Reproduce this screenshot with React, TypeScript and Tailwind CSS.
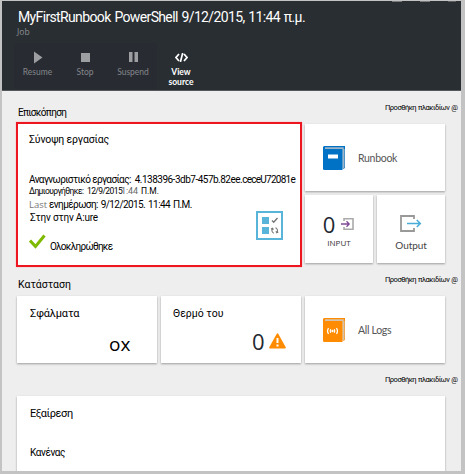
import type { ReactNode } from 'react';

const ui = "font-['Open_Sans','Noto_Sans',sans-serif]";
const label = "font-['Lato','Open_Sans',sans-serif]";

function Tile({ className = '', children }: { className?: string; children?: ReactNode }) {
  return (
    <div className={`bg-white shadow-[0_1px_2px_rgba(0,0,0,0.35)] ${className}`}>{children}</div>
  );
}

function SectionHead({ title, titleClass = '' }: { title?: string; titleClass?: string }) {
  return (
    <div className="flex h-[14px] justify-between whitespace-nowrap">
      <span className={`pt-[3px] leading-[14px] ${titleClass}`}>{title}</span>
      <span className="w-[74px] text-[7.5px] leading-[10px] tracking-[-0.5px] [word-spacing:0.5px]">Προσθήκη πλακιδίων @</span>
    </div>
  );
}

function Command({ icon, text, active = false, width }: { icon: ReactNode; text: ReactNode; active?: boolean; width: string }) {
  return (
    <div className={`flex flex-col items-center ${width} ${active ? 'font-bold text-white' : 'text-[#83868a]'}`}>
      <div className="flex h-[14px] items-center">{icon}</div>
      <div className={`mt-[3px] text-center text-[8.5px] leading-[10px] ${label}`}>{text}</div>
    </div>
  );
}

function Header() {
  return (
    <header className="h-[90px] border-b border-[#55585b] bg-[#292e32] text-white">
      <div className="flex h-px justify-end gap-[18px] pr-[5px]">
        <i className="w-[10px] bg-[#777b7e]" />
        <i className="w-[10px] bg-[#777b7e]" />
        <i className="w-[8px] bg-[#5b5f62]" />
      </div>
      <h1 className="pt-[6px] pl-[16px] text-[14px] leading-[18px] whitespace-nowrap tracking-[-0.64px] [word-spacing:1px]">
        MyFirstRunbook PowerShell 9/12/2015, 11:44 π.μ.
      </h1>
      <p className={`pl-[15px] text-[8.5px] leading-[12px] text-[#8d9094] ${ui}`}>Job</p>
      <div className="mt-[5px] flex h-[46px] pl-[12px]">
        <div className="flex bg-[#282b32] pt-[7px]">
          <Command width="w-[47px]" text="Resume" icon={<svg width="10" height="13" viewBox="0 0 10 13"><path d="M1 0.5 9.5 6.5 1 12.5Z" fill="#9c9ea1" /></svg>} />
          <Command width="w-[48px]" text="Stop" icon={<svg width="9" height="9"><path d="M0 0h9v9H0z" fill="#9c9ea1" /></svg>} />
          <Command width="w-[48px]" text="Suspend" icon={<svg width="9" height="10"><path d="M0 0h3.5v10H0zM5.5 0H9v10H5.5z" fill="#9c9ea1" /></svg>} />
        </div>
        <div className="pt-[7px]">
          <Command width="w-[48px]" active text={<><span className="block">View</span><span className="block">source</span></>} icon={<svg width="13" height="9" viewBox="0 0 13 9" fill="none" stroke="#fff" strokeWidth="1.7"><path d="M4 1 1 4.5 4 8M9 1l3 3.5L9 8M7.7 0 5.4 9" /></svg>} />
        </div>
      </div>
    </header>
  );
}

function SummaryIcon() {
  return (
    <svg width="27" height="29" viewBox="0 0 27 29" fill="none">
      <rect x="1" y="1" width="25" height="27" stroke="#59b4d9" strokeWidth="2" />
      <path d="M6 6h7v7H6zM6 16h7v7H6z" fill="#59b4d9" />
      <path d="m16 9.5 1.7 1.7L21.5 7" stroke="#777" strokeWidth="1.4" />
      <path d="M18 22.2a2.9 2.9 0 0 1-1.6-4.4M19.4 16.8a2.9 2.9 0 0 1 1.6 4.4M15 18l1.6-.8.8 1.5M22.3 21l-1.6.8-.8-1.5" stroke="#777" strokeWidth="1.1" />
    </svg>
  );
}

function Book({ color, shade, children }: { color: string; shade: string; children: ReactNode }) {
  return (
    <svg width="22" height="24" viewBox="0 0 22 24">
      <path d="M1 0h21v22l-2 1V3H0V1Z" fill={color} />
      <path d="M2 1.3h18.7v20.5L19.5 22V3H2Z" fill={shade} />
      <path d="M19.5 3h2v18.5l-2 1.5Z" fill={shade} />
      <path d="M0 3h19.5v21H1.2Q0 24 0 22.8Z" fill={color} />
      {children}
    </svg>
  );
}

export default function App() {
  return (
    <div className="h-[474px] w-[465px] overflow-hidden border-t border-r-[4px] border-b-[3px] border-l-2 border-[#c3c3c3] bg-[#eee] font-['Roboto','Noto_Sans',sans-serif] text-black">
      <Header />
      <main className="pr-[2px] pl-[15px]">
        <div className="pt-[12px]"><SectionHead title="Επισκόπηση" titleClass="pl-px text-[10px] tracking-[-0.65px]" /></div>
        <div className="mt-[5px] -ml-px flex">
          <section className="h-[145px] w-[286px] border-2 border-[#ed1620] bg-white pt-[9px] pl-[11px] whitespace-nowrap shadow-[0_0_1px_#f88]">
            <h2 className="text-[10.5px] leading-[14px] tracking-[-0.15px]">Σύνοψη εργασίας</h2>
            <p className="mt-[26px] text-[10px] leading-[13px] tracking-[-0.6px]">Αναγνωριστικό εργασίας: <span className="ml-[2px] tracking-[-0.5px]">4.138396-3db7-457b.82ee.</span><span className="tracking-[-0.75px]">ceceU72081e</span></p>
            <p className="flex text-[8.5px] leading-[10px]">
              <span className="w-[58px] tracking-[-0.6px]">Δημιουργήθηκε:</span>
              <span className="w-[34px] tracking-[-0.6px]">12/9/2015</span>
              <span className="w-[20px] text-[9px] tracking-[-0.1px] text-[#666]">1:44</span>
              <span>Π.Μ.</span>
            </p>
            <p className="mt-[2px] flex text-[10px] leading-[13px]">
              <span className={`w-[20px] text-[9.5px] text-[#777] ${ui}`}>Last</span>
              <span className="tracking-[-0.58px] [word-spacing:1px]">ενημέρωση: 9/12/2015. 11:44 Π.Μ.</span>
            </p>
            <p className="pl-px text-[10px] leading-[13px] tracking-[-0.2px]">Στην στην A:ure</p>
            <div className="mt-[10px] flex h-[18px]">
              <svg width="17" height="15" viewBox="0 0 17 15" fill="none" stroke="#7fba00" strokeWidth="3"><path d="m1 6.5 5.5 6L15.5 1.5" /></svg>
              <span className="mt-[6px] ml-[4px] text-[10px] leading-[14px] tracking-[-0.72px]">Ολοκληρώθηκε</span>
            </div>
            <div className="-mt-[41px] ml-[227px]"><SummaryIcon /></div>
          </section>
          <div className="mt-[2px] ml-[3px] flex w-[140px] flex-col gap-[4px]">
            <Tile className="flex h-[67px] items-center pl-[18px]">
              <Book color="#0072c6" shade="#9db5c7"><path d="M5 8.5h10v4H5z" fill="#fff" /></Book>
              <span className={`mt-[2px] ml-[13px] text-[10.5px] tracking-[-0.3px] text-[#555] ${label}`}>Runbook</span>
            </Tile>
            <div className="flex gap-[4px]">
              <Tile className="h-[68px] w-[68px] pt-[17px]">
                <div className="flex h-[23px] items-center justify-center">
                  <span className={`-ml-px text-[22px] leading-[22px] font-medium text-[#222831] ${ui}`}>0</span>
                  <svg className="ml-[6px]" width="13" height="12" viewBox="0 0 13 12" fill="none"><path d="M3 3V.8h9v10.4H3V9" stroke="#aaa" strokeWidth="1.6" /><path d="M0 6h8M5.5 3.3 8.2 6 5.5 8.7" stroke="#804998" strokeWidth="1.3" /></svg>
                </div>
                <div className={`mt-px text-center text-[8px] leading-[13px] text-[#333] ${ui}`}>INPUT</div>
              </Tile>
              <Tile className="flex h-[68px] w-[68px] flex-col items-center pt-[20px]">
                <svg width="22" height="17" viewBox="0 0 22 17" fill="none"><path d="M14 4V1H1v15h13v-3" stroke="#999" strokeWidth="1.8" /><path d="M7 8.5h13M16.8 5 20.3 8.5 16.8 12" stroke="#49add8" strokeWidth="1.5" /></svg>
                <span className={`mt-[5px] text-[10px] leading-[16px] tracking-[-0.1px] text-[#444] ${label}`}>Output</span>
              </Tile>
            </div>
          </div>
        </div>
        <div className="mt-[8px]"><SectionHead title="Κατάσταση" titleClass="pl-px text-[10.5px]" /></div>
        <div className="mt-[7px] flex gap-[4px]">
          <Tile className="h-[67px] w-[140px] pt-[10px] pl-[13px]">
            <h2 className="text-[11px] leading-[15px] tracking-[-0.15px]">Σφάλματα</h2>
            <p className={`mt-[11px] ml-[79px] text-[19px] leading-[24px] font-medium ${ui}`}>ox</p>
          </Tile>
          <Tile className="h-[67px] w-[140px] pt-[10px] pl-[12px]">
            <h2 className="text-[10.5px] leading-[15px]">Θερμό του</h2>
            <div className="mt-[8px] ml-[79px] flex items-center">
              <span className={`text-[22px] leading-[24px] font-medium text-[#222831] ${ui}`}>0</span>
              <svg className="ml-[4px]" width="17" height="16" viewBox="0 0 17 16"><path d="M8.5 1.2 16 14.6H1Z" fill="#ff8c00" stroke="#ff8c00" strokeWidth="1.7" strokeLinejoin="round" /><path d="M7.5 5h2v5h-2zM7.5 11.5h2v2h-2z" fill="#fff" /></svg>
            </div>
          </Tile>
          <Tile className="flex h-[67px] w-[140px] items-center pl-[18px]">
            <Book color="#ff8c00" shade="#d6c2aa"><g fill="none" stroke="#fff" strokeWidth="1.2"><path d="M5.5 10Q3.5 13 5.5 16M7.7 11.2Q6.7 13 7.7 14.8M13.5 10q2 3 0 6M11.3 11.2q1 1.8 0 3.6" /></g><circle cx="9.5" cy="13" r="1.2" fill="#fff" /></Book>
            <span className={`mt-[2px] ml-[13px] text-[10.5px] tracking-[-0.3px] text-[#555] ${label}`}>All Logs</span>
          </Tile>
        </div>
        <div className="mt-[12px]"><SectionHead /></div>
        <Tile className="mt-[7px] h-[78px] w-[428px] pt-[10px] pl-[13px]">
          <h2 className="text-[11px] leading-[15px] tracking-[-0.4px]">Εξαίρεση</h2>
          <p className="mt-[24px] text-[10px] leading-[15px] tracking-[-0.4px]">Κανένας</p>
        </Tile>
      </main>
    </div>
  );
}
